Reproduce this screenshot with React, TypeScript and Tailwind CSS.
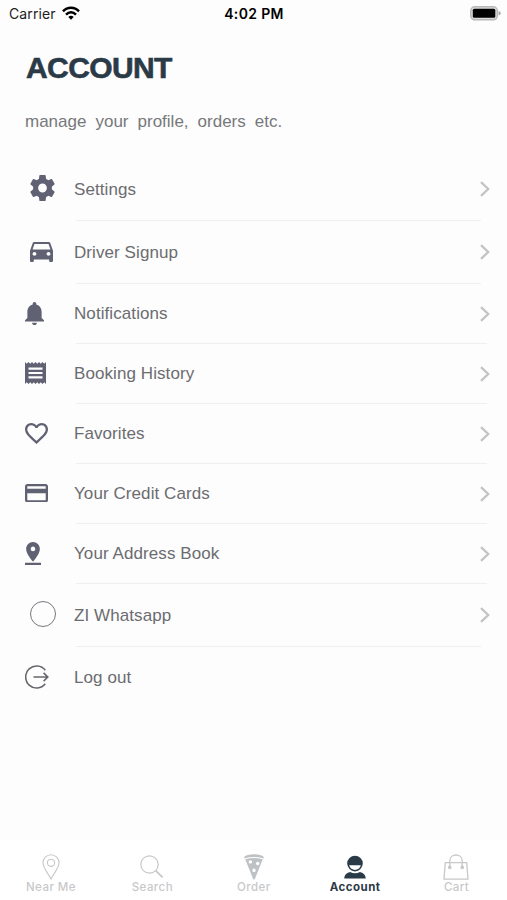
import type { ReactNode } from 'react';

type Row = {
  label: string;
  height: string;
  line?: string;
  text?: string;
  icon: ReactNode;
};

const rows: Row[] = [
  {
    label: 'Settings',
    height: 'h-[64px]',
    line: 'mr-[26px]',
    text: 'pt-[2px]',
    icon: (
      <svg className="ml-[5px] mb-[3px] w-[25px] h-[26px]" viewBox="2 2 20 20" preserveAspectRatio="none" fill="currentColor">
        <path d="M19.43 12.98c.04-.32.07-.64.07-.98s-.03-.66-.07-.98l2.11-1.65c.19-.15.24-.42.12-.64l-2-3.46c-.12-.22-.39-.3-.61-.22l-2.49 1c-.52-.4-1.08-.73-1.69-.98l-.38-2.65C14.46 2.18 14.25 2 14 2h-4c-.25 0-.46.18-.49.42l-.38 2.65c-.61.25-1.17.59-1.69.98l-2.49-1c-.23-.09-.49 0-.61.22l-2 3.46c-.13.22-.07.49.12.64l2.11 1.65c-.04.32-.07.65-.07.98s.03.66.07.98l-2.11 1.65c-.19.15-.24.42-.12.64l2 3.46c.12.22.39.3.61.22l2.49-1c.52.4 1.08.73 1.69.98l.38 2.65c.03.24.24.42.49.42h4c.25 0 .46-.18.49-.42l.38-2.65c.61-.25 1.17-.59 1.69-.98l2.49 1c.23.09.49 0 .61-.22l2-3.46c.12-.22.07-.49-.12-.64l-2.11-1.65zM12 15.500c-1.930 0-3.500-1.570-3.500-3.500s1.570-3.500 3.500-3.500 3.500 1.570 3.500 3.500-1.570 3.500-3.500 3.500z" />
      </svg>
    ),
  },
  {
    label: 'Driver Signup',
    height: 'h-[63px]',
    line: 'mr-[26px]',
    text: 'pt-[2px]',
    icon: (
      <svg className="ml-[5px] mb-[1px] w-[23px] h-[20px]" viewBox="3 5 18 16" preserveAspectRatio="none" fill="currentColor">
        <path d="M18.92 6.01C18.72 5.42 18.16 5 17.5 5h-11c-.66 0-1.21.42-1.42 1.01L3 12v8c0 .55.45 1 1 1h1c.55 0 1-.45 1-1v-1h12v1c0 .55.45 1 1 1h1c.55 0 1-.45 1-1v-8l-2.08-5.99zM6.5 16c-.83 0-1.5-.67-1.5-1.5S5.67 13 6.5 13s1.5.67 1.5 1.5S7.33 16 6.5 16zm11 0c-.83 0-1.5-.67-1.5-1.5s.67-1.5 1.5-1.5 1.5.67 1.5 1.5-.67 1.5-1.5 1.5zM5 11l1.5-4.5h11L19 11H5z" />
      </svg>
    ),
  },
  {
    label: 'Notifications',
    height: 'h-[60px]',
    line: 'mr-[20px]',
    icon: (
      <svg className="mb-[1px] w-[19px] h-[23px]" viewBox="4 2.5 16 19.5" preserveAspectRatio="none" fill="currentColor">
        <path d="M12 22c1.1 0 2-.9 2-2h-4c0 1.1.89 2 2 2zm6-6v-5c0-3.07-1.64-5.64-4.5-6.32V4c0-.83-.67-1.5-1.5-1.5s-1.5.67-1.5 1.5v.68C7.63 5.36 6 7.92 6 11v5l-2 2v1h16v-1l-2-2z" />
      </svg>
    ),
  },
  {
    label: 'Booking History',
    height: 'h-[60px]',
    line: 'mr-[20px]',
    icon: (
      <svg className="mb-[2px] w-[21px] h-[22px]" viewBox="3 2 18 20" preserveAspectRatio="none" fill="currentColor">
        <path d="M18 17H6v-2h12v2zm0-4H6v-2h12v2zm0-4H6V7h12v2zM3 22l1.5-1.5L6 22l1.5-1.5L9 22l1.5-1.5L12 22l1.5-1.5L15 22l1.5-1.5L18 22l1.5-1.5L21 22V2l-1.5 1.5L18 2l-1.5 1.5L15 2l-1.5 1.5L12 2l-1.5 1.5L9 2 7.5 3.5 6 2 4.5 3.5 3 2v20z" />
      </svg>
    ),
  },
  {
    label: 'Favorites',
    height: 'h-[60px]',
    line: 'mr-[20px]',
    icon: (
      <svg className="mb-[2px] w-[23px] h-[21px]" viewBox="2 3 20 18.35" preserveAspectRatio="none" fill="currentColor">
        <path d="M16.5 3c-1.74 0-3.41.81-4.5 2.09C10.91 3.81 9.24 3 7.5 3 4.42 3 2 5.42 2 8.5c0 3.78 3.4 6.86 8.55 11.54L12 21.35l1.45-1.32C18.6 15.36 22 12.28 22 8.5 22 5.42 19.58 3 16.5 3zm-4.4 15.55-.1.1-.1-.1C7.14 14.24 4 11.39 4 8.5 4 6.5 5.5 5 7.5 5c1.54 0 3.04.99 3.57 2.36h1.87C13.46 5.99 14.96 5 16.5 5c2 0 3.5 1.5 3.5 3.5 0 2.89-3.14 5.74-7.9 10.05z" />
      </svg>
    ),
  },
  {
    label: 'Your Credit Cards',
    height: 'h-[60px]',
    line: 'mr-[20px]',
    icon: (
      <svg className="mb-[2px] w-[23px] h-[18.5px]" viewBox="2 4 20 16" preserveAspectRatio="none" fill="currentColor">
        <path d="M20 4H4c-1.11 0-1.99.89-1.99 2L2 18c0 1.11.89 2 2 2h16c1.11 0 2-.89 2-2V6c0-1.11-.89-2-2-2zm0 14H4v-6h16v6zm0-10H4V6h16v2z" />
      </svg>
    ),
  },
  {
    label: 'Your Address Book',
    height: 'h-[60px]',
    line: 'mr-[20px]',
    icon: (
      <svg className="mb-[2px] w-[16px] h-[23px]" viewBox="5 2 14 20" preserveAspectRatio="none" fill="currentColor">
        <path d="M18 8c0-3.31-2.69-6-6-6S6 4.69 6 8c0 4.5 6 11 6 11s6-6.5 6-11zm-8 0c0-1.1.9-2 2-2s2 .9 2 2-.89 2-2 2c-1.1 0-2-.9-2-2zM5 20v2h14v-2H5z" />
      </svg>
    ),
  },
  {
    label: 'ZI Whatsapp',
    height: 'h-[63px]',
    line: 'mr-[26px]',
    text: 'pt-[2px]',
    icon: <span className="ml-[5px] mb-[3px] w-[26px] h-[26px] rounded-full border-[1.5px] border-[#77787d]" />,
  },
  {
    label: 'Log out',
    height: 'h-[61px]',
    icon: (
      <svg className="mb-[2px] w-[24px] h-[24px] text-[#66676c]" viewBox="0 0 24 24" fill="none" stroke="currentColor" strokeWidth="1.6">
        <path d="M20.3 5.2A11 11 0 1 0 20.3 18.8M8.5 12H23M18.6 7.9L22.8 12L18.6 16.1" />
      </svg>
    ),
  },
];

const tabs: { label: string; active?: boolean; icon: ReactNode }[] = [
  {
    label: 'Near Me',
    icon: (
      <svg width="18" height="26" viewBox="0 0 18 26" fill="none" stroke="currentColor" strokeWidth="1.1">
        <path d="M9 25C7 20.5 1 14 1 8.7A8 8 0 0 1 17 8.7C17 14 11 20.5 9 25Z" />
        <circle cx="9" cy="8.8" r="3.6" />
      </svg>
    ),
  },
  {
    label: 'Search',
    icon: (
      <svg width="24" height="26" viewBox="0 0 24 26" fill="none" stroke="currentColor">
        <circle cx="9.5" cy="10.5" r="8.7" strokeWidth="1.2" />
        <path d="M15.7 16.7L22.6 23.4" strokeWidth="1.8" />
      </svg>
    ),
  },
  {
    label: 'Order',
    icon: (
      <svg className="ml-px text-[#bfc2c5]" width="20" height="26" viewBox="0 0 20 26" fill="currentColor">
        <path d="M.2 4.4C.2 2 1 1.8 3 1.2 7.5 0 12.5 0 17 1.2c2 .6 2.8.8 2.8 3.2C13.5 2.6 6.5 2.6.2 4.4Z" />
        <path
          fillRule="evenodd"
          d="M1.2 5.2C7 3.6 13 3.6 18.8 5.2L10.9 25Q10 26 9.1 25ZM6.4 6.2a1.7 1.7 0 1 0 .01 0ZM13.7 7.8a1.7 1.7 0 1 0 .01 0ZM10 14.6a1.7 1.7 0 1 0 .01 0Z"
        />
      </svg>
    ),
  },
  {
    label: 'Account',
    active: true,
    icon: (
      <svg width="22" height="26" viewBox="0 0 22 26" fill="currentColor">
        <path fillRule="evenodd" d="M11 1.8a7.8 7.8 0 1 1 0 15.6A7.8 7.8 0 0 1 11 1.8ZM5.1 11.3C6 14.4 8.4 15.9 11 15.9s5-1.5 5.9-4.6Z" />
        <path d="M.3 24.4C.3 20.5 3 19 6 18Q11 20.4 16 18C19 19 21.7 20.5 21.7 24.4Z" />
      </svg>
    ),
  },
  {
    label: 'Cart',
    icon: (
      <svg width="26" height="26" viewBox="0 0 26 26" fill="none" stroke="currentColor" strokeWidth="1.3">
        <path d="M2.3 8.6H23.7L25 25.2H1Z" />
        <path d="M6.8 13V7C6.8-1 19.2-1 19.2 7V13" />
        <circle cx="6.8" cy="13.3" r="1.2" fill="currentColor" />
        <circle cx="19.2" cy="13.3" r="1.2" fill="currentColor" />
      </svg>
    ),
  },
];

function StatusBar() {
  return (
    <div className="grid h-[28px] grid-cols-3 items-center pb-[2px] pl-[8px] pr-[7px] font-[Inter,sans-serif] text-black">
      <div className="flex items-center gap-[6px]">
        <span className="pl-px text-[14px] tracking-[0.1px] text-[#222]">Carrier</span>
        <svg width="18" height="14" viewBox="0 0 18 14" fill="none" stroke="black" strokeWidth="2.5">
          <path d="M1 5.4C5.5.6 12.5.6 17 5.4M4 8.6C7 5.6 11 5.6 14 8.6" />
          <path d="M9 13.7L6.3 11Q9 8.7 11.7 11Z" fill="black" stroke="none" />
        </svg>
      </div>
      <span className="whitespace-nowrap text-center text-[14px] font-semibold tracking-[0.35px]">4:02 PM</span>
      <svg className="-mr-px justify-self-end" width="31" height="15" viewBox="0 0 31 15">
        <rect x="0.8" y="0.8" width="26.5" height="13" rx="4" fill="#ddd" stroke="#b8b8b8" strokeWidth="1.5" />
        <rect x="2.8" y="2.8" width="22.5" height="9" rx="1.5" fill="black" />
        <path d="M28.5 5Q30.7 5.5 30.7 7.3T28.5 9.6Z" fill="#a8a8a8" />
      </svg>
    </div>
  );
}

function Chevron() {
  return (
    <svg className="mr-[17px] shrink-0 text-[#c4c4c6]" width="10" height="16" viewBox="0 0 10 16" fill="none" stroke="currentColor" strokeWidth="2.3">
      <path d="M1 1.2L8.2 8L1 14.8" />
    </svg>
  );
}

export default function App() {
  return (
    <div className="flex h-[900px] w-[507px] flex-col overflow-hidden bg-[#fdfdfd] font-['Liberation_Sans',Arial,sans-serif]">
      <StatusBar />

      <header className="h-[129px] pl-[26px] pt-[22px]">
        <h1 className="text-[30px] font-bold leading-[36px] tracking-[-0.6px] text-[#2b3a47] [-webkit-text-stroke:0.6px_#2b3a47]">
          ACCOUNT
        </h1>
        <p className="-ml-px mt-[26px] text-[17px] leading-[20px] [word-spacing:4.3px] text-[#77787b]">
          manage your profile, orders etc.
        </p>
      </header>

      <main className="flex-1">
        {rows.map((row) => (
          <div key={row.label} className={`flex pl-[25px] ${row.height}`}>
            <div className="flex w-[49px] shrink-0 items-center text-[#606172]">{row.icon}</div>
            <div className="flex flex-1 flex-col">
              <div className="flex flex-1 items-center justify-between">
                <span className={`text-[17px] leading-[20px] tracking-[0.08px] text-[#6b6c70] ${row.text ?? ''}`}>
                  {row.label}
                </span>
                {row.line && <Chevron />}
              </div>
              {row.line && <div className={`ml-[2px] h-px bg-[#efeff0] ${row.line}`} />}
            </div>
          </div>
        ))}
      </main>

      <nav className="grid h-[60px] grid-cols-5 bg-white font-[Inter,sans-serif]">
        {tabs.map((tab) => (
          <div
            key={tab.label}
            className={`flex flex-col items-center pt-[14px] ${tab.active ? 'text-[#2b3a47]' : 'text-[#c8c8ca]'}`}
          >
            {tab.icon}
            <span className={`pl-[0.5px] text-[11.5px] leading-[14px] tracking-[0.45px] ${tab.active ? 'font-bold' : 'font-medium'}`}>
              {tab.label}
            </span>
          </div>
        ))}
      </nav>
    </div>
  );
}
